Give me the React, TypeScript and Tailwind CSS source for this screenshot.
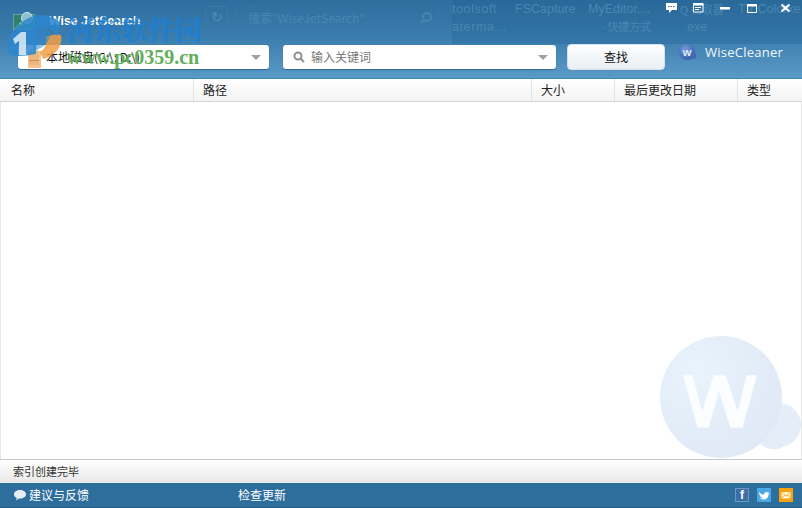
import React from "react";

const cjk = "font-['Noto_Sans_CJK_SC','Liberation_Sans',sans-serif]";

function Arrow() {
  return <span className="ml-auto w-0 h-0 border-x-[5px] border-x-transparent border-t-[5px] border-t-[#a0a0a0]" />;
}

function Col({ w, label, pad, last }: { w: string; label: string; pad: string; last?: boolean }) {
  return (
    <div className={`${w} ${pad} h-full flex items-center text-[12px] text-[#222] ${last ? "" : "border-r border-[#e2e2e2]"}`}>
      {label}
    </div>
  );
}

function Ghost() {
  return (
    <div className="absolute inset-0 pointer-events-none overflow-hidden text-[12.500px] leading-[16px] text-[#4a86b1] font-['Liberation_Sans',sans-serif]">
      <div className="absolute left-[205px] top-[6px] w-[23px] h-[22px] border border-[#3a79a8] rounded-sm flex items-center justify-center text-[14px] text-[#4f8ab5]">↻</div>
      <div className="absolute left-[236px] top-[6px] w-[204px] h-[23px] border border-[#3675a4] rounded-sm" />
      <div className={`absolute left-[248px] top-[10px] text-[12px] ${cjk}`}>搜索"WiseJetSearch"</div>
      <svg className="absolute left-[419px] top-[11px]" width="14" height="14" viewBox="0 0 14 14" fill="none" stroke="#4883ae" strokeWidth="2">
        <circle cx="8" cy="6" r="4" />
        <path d="M5 9l-3 3" />
      </svg>
      <div className="absolute left-[452px] top-0 w-[350px] h-[44px] bg-[#1f5f91]/30" />
      <div className="absolute left-[452px] top-[1px] tracking-[0.6px]">toolsoft</div>
      <div className="absolute left-[452px] top-[19px] tracking-[0.6px]">aterma...</div>
      <div className="absolute left-[515px] top-[1px]">FSCapture</div>
      <div className="absolute left-[588px] top-[1px]">MyEditor....</div>
      <div className={`absolute left-[601px] top-[18px] text-[11px] ${cjk}`}>- 快捷方式</div>
      <div className={`absolute left-[680px] top-[1px] text-[11px] ${cjk}`}>Q 扫取器</div>
      <div className="absolute left-[687px] top-[19px]">exe</div>
      <div className="absolute left-[738px] top-[1px]">TV Colorxe</div>
    </div>
  );
}

function BrandWatermark() {
  return (
    <div className="absolute left-0 top-0 w-[240px] h-[72px] pointer-events-none">
      <svg className="absolute left-[6px] top-[10px]" width="58" height="58" viewBox="0 0 58 58">
        <path d="M40 27c4-2 10-3 15-2 2 12-6 21-18 24l-3-7c5-3 7-8 6-15z" fill="#ee9f44" opacity="0.85" />
        <rect x="22" y="41" width="13" height="17" fill="#ec9a3c" opacity="0.6" />
        <path d="M2 42C0 24 16 6 34 5c9 0 17 3 21 9l-4 12c-3-6-7-9-13-9-2 0-5 1-7 2l-1 25C18 46 6 48 2 42z" fill="#2d86cf" opacity="0.85" />
        <path d="M27 15h9c7 2 9 7 7 14-2 5-6 9-16 12z" fill="#2d86cf" opacity="0.55" />
        <path d="M7 29l8-7h5v23h-7V31l-4 3z" fill="#dcebf7" opacity="0.85" />
      </svg>
      <div className={`absolute left-[67px] top-[13px] text-[27px] leading-[32px] font-black text-[#1e7fd0]/85 font-['Noto_Serif_CJK_SC','Noto_Sans_CJK_SC',serif]`}>河东软件园</div>
      <div className="absolute left-[67px] top-[47px] text-[20px] leading-[20px] font-bold text-[#63ad5c] font-['Liberation_Serif',serif]">www.pc0359.cn</div>
    </div>
  );
}

function Header() {
  return (
    <header className="relative h-[79px] shrink-0 bg-[linear-gradient(#2f6d9e_0%,#3a7cad_45%,#5a9ac7_100%)] border-b border-[#3e87b8]">
      <Ghost />
      <div className="relative h-[45px] flex items-start">
        <svg className="ml-[13px] mt-[12px]" width="22" height="18" viewBox="0 0 22 18">
          <rect x=".5" y="2.500" width="21" height="15" fill="#2f7f6e" stroke="#6c9ea8" />
          <path d="M1 16l7-7 5 4 8-5v9H1z" fill="#4c9a78" />
          <circle cx="14" cy="6" r="5.500" fill="#8cc0cf" stroke="#cfe6ee" />
          <circle cx="8" cy="12" r="1.500" fill="#eaffd8" />
        </svg>
        <div className="ml-[14px] mt-[12px] text-[12px] leading-[18px] font-bold tracking-[0.2px] text-white font-['Liberation_Sans',sans-serif]">Wise JetSearch</div>
        <div className="ml-auto mr-[12px] flex items-start text-white">
          <svg className="mr-[16px] mt-[3px]" width="11" height="10" viewBox="0 0 11 10"><path d="M0 0h11v7H6L3 10V7H0z" fill="#fff" /><path d="M2 3.500h7" stroke="#2f6d9e" strokeDasharray="1.500 1" /></svg>
          <svg className="mr-[16px] mt-[3px]" width="11" height="10" viewBox="0 0 11 10" fill="none" stroke="#fff"><path d="M.5.500h9.500v8.500h-9.500z" /><path d="M0 1.500h10.500" strokeWidth="2" /><path d="M2 4.500h6M2 6.500h4" /></svg>
          <svg className="mr-[17px] mt-[6px]" width="10" height="4" viewBox="0 0 10 4"><rect y="1" width="10" height="2.500" fill="#fff" /></svg>
          <svg className="mr-[24px] mt-[4px]" width="10" height="9" viewBox="0 0 10 9" fill="none" stroke="#fff"><path d="M.5.500h9v8h-9z" /><path d="M0 1.500h10" strokeWidth="2" /></svg>
          <svg className="mt-[4px]" width="9" height="8" viewBox="0 0 9 8" fill="none" stroke="#fff" strokeWidth="2.200"><path d="M.5.500l8 7M8.500.500l-8 7" /></svg>
        </div>
      </div>
      <div className={`relative flex items-start pl-[18px] ${cjk}`}>
        <div className="w-[251px] h-[24px] bg-white rounded-[3px] flex items-center pl-[11px] pr-[8px] text-[12px] text-[#111] shadow-[0_1px_1px_#2c6a98]">
          <span className="w-[10px] h-[16px] mr-[7px] bg-[linear-gradient(#e6e6e6_70%,#8a7a55_70%,#8a7a55_78%,#e6e6e6_78%)]" />
          <span>本地磁盘(C:\; D:\)</span>
          <Arrow />
        </div>
        <div className="ml-[14px] w-[273px] h-[24px] bg-white rounded-[3px] flex items-center pl-[10px] pr-[8px] text-[12px] text-[#777] shadow-[0_1px_1px_#2c6a98]">
          <svg className="mr-[6px]" width="12" height="12" viewBox="0 0 12 12" fill="none" stroke="#909090" strokeWidth="2"><circle cx="5" cy="5" r="3.500" /><path d="M7.500 7.500L11 11" /></svg>
          <span>输入关键词</span>
          <Arrow />
        </div>
        <button className="ml-[11px] -mt-px w-[98px] h-[26px] rounded-[4px] bg-[linear-gradient(#ffffff,#e9eff4)] text-[12px] text-[#111] border border-[#d5e1ea]">查找</button>
        <div className="ml-[13px] -mt-[2px] flex items-center h-[20px]">
          <svg width="20" height="20" viewBox="0 0 20 20">
            <defs>
              <radialGradient id="s" cx="0.4" cy="0.3" r="0.8">
                <stop offset="0" stopColor="#6f97d8" />
                <stop offset="1" stopColor="#3159a3" />
              </radialGradient>
            </defs>
            <circle cx="9" cy="9" r="8" fill="url(#s)" />
            <circle cx="15.500" cy="13" r="3" fill="#3f6ab2" />
            <text x="9" y="12.500" textAnchor="middle" fontSize="9.500" fontWeight="700" fill="#e6eefa" fontFamily="Liberation Sans">W</text>
          </svg>
          <span className="ml-[7px] text-[13px] tracking-[0.25px] text-[#f2f7fb] font-['Open_Sans','Liberation_Sans',sans-serif]">WiseCleaner</span>
        </div>
      </div>
    </header>
  );
}

function BigLogo() {
  return (
    <div className="absolute right-0 bottom-0 w-[142px] h-[124px] pointer-events-none overflow-hidden">
      <svg width="142" height="124" viewBox="0 0 142 124">
        <defs>
          <radialGradient id="g" cx="0.3" cy="0.3" r="0.85">
            <stop offset="0" stopColor="#e8f3fc" />
            <stop offset="1" stopColor="#dfe8f5" />
          </radialGradient>
        </defs>
        <circle cx="120" cy="90" r="22" fill="#e4edf8" />
        <circle cx="62" cy="62" r="61" fill="url(#g)" />
        <path d="M100 108q12 10 24 4l-4-14z" fill="#e4edf8" />
        <path d="M25 41h8l10 38 12-38h11l13 38 9-38h9l-14 51H72L60 54 49 92H39z" fill="#fbfdff" stroke="#fbfdff" strokeWidth="1.500" strokeLinejoin="round" />
      </svg>
    </div>
  );
}

export default function App() {
  return (
    <div className={`relative w-[802px] h-[508px] overflow-hidden flex flex-col bg-white ${cjk}`}>
      <Header />
      <div className="h-[23px] shrink-0 flex items-center bg-[linear-gradient(#ffffff,#f3f3f3)] border-b border-[#d4d4d4]">
        <Col w="w-[194px]" pad="pl-[11px]" label="名称" />
        <Col w="w-[338px]" pad="pl-[9px]" label="路径" />
        <Col w="w-[83px]" pad="pl-[9px]" label="大小" />
        <Col w="w-[123px]" pad="pl-[9px]" label="最后更改日期" />
        <Col w="flex-1" pad="pl-[9px]" label="类型" last />
      </div>
      <main className="relative flex-1 border-x border-[#e6e6e6]">
        <BigLogo />
      </main>
      <div className="h-[24px] shrink-0 flex items-center pl-[13px] text-[11px] text-[#333] border-t border-[#c6c9cb] bg-[linear-gradient(#ffffff,#e8e8e8)]">索引创建完毕</div>
      <footer className="h-[25px] shrink-0 flex items-center bg-[#2d6e9d] text-white text-[12px] border-b border-[#255a82]">
        <svg className="ml-[14px] mr-[3px]" width="12" height="11" viewBox="0 0 12 11"><path d="M6 0c3.300 0 6 1.800 6 4.300S9.300 8.600 6 8.600H5L2 10.500l.8-2.600C1 7.200 0 5.900 0 4.300 0 1.800 2.700 0 6 0z" fill="#e8eef3" /></svg>
        <span>建议与反馈</span>
        <span className="ml-[149px]">检查更新</span>
        <div className="ml-auto mr-[9px] flex items-center gap-[8px]">
          <span className="w-[14px] h-[14px] bg-[#3b6ea5] border border-[#6d97c0] flex items-center justify-center text-[12px] font-bold leading-none font-['Liberation_Sans',sans-serif]">f</span>
          <svg width="14" height="14" viewBox="0 0 14 14"><rect width="14" height="14" fill="#4aa8e6" /><path d="M2 4c2 2 3 2.500 5 2.600C7 4.500 9.500 3.200 11 4.800l1.300-.5-.8 1.300 1-.2-1 1c0 3-2.500 5-5 5-1.500 0-3-.4-4-1.100 1.300 0 2.300-.3 3-.9C3.800 9 3 8.500 2.700 7.500l.9-.1C2.500 7 2 6 2 5.300l.9.200C2 5 1.700 4.700 2 4z" fill="#fff" /></svg>
          <svg width="14" height="14" viewBox="0 0 14 14"><rect width="14" height="14" fill="#f5a20f" /><rect x="2.500" y="4" width="9" height="6.500" fill="#fff3d6" /><path d="M2.500 4L7 8l4.500-4M2.500 10.500L5.500 7M11.500 10.500L8.500 7" fill="none" stroke="#f5a20f" strokeWidth=".8" /></svg>
        </div>
      </footer>
      <BrandWatermark />
    </div>
  );
}
